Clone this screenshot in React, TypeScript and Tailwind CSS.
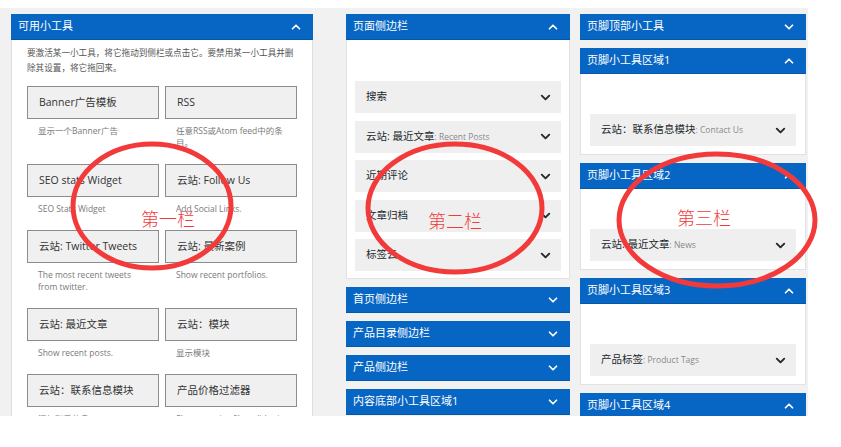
import { ChevronDown, ChevronUp } from "lucide-react";

const FONT = {
  fontFamily: '"Open Sans", "Noto Sans CJK SC", sans-serif',
};

const AVAILABLE_WIDGETS: { title: string; desc: string }[] = [
  { title: "Banner广告模板", desc: "显示一个Banner广告" },
  { title: "RSS", desc: "任意RSS或Atom feed中的条目。" },
  { title: "SEO stats Widget", desc: "SEO Stats Widget" },
  { title: "云站: Follow Us", desc: "Add Social Links." },
  { title: "云站: Twitter Tweets", desc: "The most recent tweets from twitter." },
  { title: "云站: 最新案例", desc: "Show recent portfolios." },
  { title: "云站: 最近文章", desc: "Show recent posts." },
  { title: "云站：模块", desc: "显示模块" },
  { title: "云站：联系信息模块", desc: "添加联系信息" },
  { title: "产品价格过滤器", desc: "Shows a price filter slider in a widget." },
];

const PAGE_SIDEBAR: { name: string; sub?: string }[] = [
  { name: "搜索" },
  { name: "云站: 最近文章", sub: "Recent Posts" },
  { name: "近期评论" },
  { name: "文章归档" },
  { name: "标签云" },
];

const COLLAPSED_SIDEBARS = ["首页侧边栏", "产品目录侧边栏", "产品侧边栏", "内容底部小工具区域1"];

const FOOTER_AREAS: { title: string; item: { name: string; sub: string } }[] = [
  { title: "页脚小工具区域1", item: { name: "云站：联系信息模块", sub: "Contact Us" } },
  { title: "页脚小工具区域2", item: { name: "云站: 最近文章", sub: "News" } },
  { title: "页脚小工具区域3", item: { name: "产品标签", sub: "Product Tags" } },
];

function Header({ title, open }: { title: string; open?: boolean }) {
  return (
    <div className="flex h-[26px] shrink-0 items-center justify-between border-b border-[#0557a8] bg-[#0766c4] pl-[7px] pr-[10px] text-[11px] text-white">
      <span>{title}</span>
      {open ? (
        <ChevronUp size={14} strokeWidth={3} />
      ) : (
        <ChevronDown size={14} strokeWidth={3} />
      )}
    </div>
  );
}

function SidebarItem({ name, sub }: { name: string; sub?: string }) {
  return (
    <div className="flex h-[32px] shrink-0 items-center justify-between bg-[#efefef] pl-[11px] pr-[8px]">
      <span className="text-[10.5px] text-[#23282d]">
        {name}
        {sub && <span className="text-[8.5px] text-[#8a8a8a]">: {sub}</span>}
      </span>
      <ChevronDown size={15} strokeWidth={3} className="text-[#23282d]" />
    </div>
  );
}

export default function App() {
  return (
    <div className="relative h-[447px] w-[841px] overflow-hidden bg-white" style={FONT}>
      <div className="mt-[8px] flex h-[408px] w-[808px] items-start overflow-hidden bg-[#f1f1f1] pl-[11px] pt-[6px]">
        {/* Available widgets */}
        <div className="w-[302px] shrink-0">
          <Header title="可用小工具" open />
          <div className="border-x border-[#dedede] bg-white px-[15px] pb-[20px] pt-[6px]">
            <p className="mb-[10px] text-[8.6px] leading-[15px] text-[#555]">
              要激活某一小工具，将它拖动到侧栏或点击它。要禁用某一小工具并删除其设置，将它拖回来。
            </p>
            <div className="grid grid-cols-2 gap-x-[6px] gap-y-[15px]">
              {AVAILABLE_WIDGETS.map((w) => (
                <div key={w.title}>
                  <div className="flex h-[33px] items-center border border-[#8c8c8c] bg-[#f0f0f0] pl-[11px] text-[10.5px] text-[#333]">
                    {w.title}
                  </div>
                  <p className="mt-[6px] px-[11px] text-[8.5px] leading-[12px] text-[#7a7a7a]">
                    {w.desc}
                  </p>
                </div>
              ))}
            </div>
          </div>
        </div>

        {/* Sidebars */}
        <div className="ml-[33px] flex w-[224px] shrink-0 flex-col">
          <Header title="页面侧边栏" open />
          <div className="flex flex-col gap-[7.5px] border-x border-b border-[#e2e2e2] bg-white px-[8px] pb-[7px] pt-[41px]">
            {PAGE_SIDEBAR.map((it) => (
              <SidebarItem key={it.name} name={it.name} sub={it.sub} />
            ))}
          </div>
          {COLLAPSED_SIDEBARS.map((t) => (
            <div key={t} className="mt-[8px]">
              <Header title={t} />
            </div>
          ))}
        </div>

        {/* Footer areas */}
        <div className="ml-[10px] flex w-[226px] shrink-0 flex-col gap-[8px]">
          <Header title="页脚顶部小工具" />
          {FOOTER_AREAS.map((a) => (
            <div key={a.title}>
              <Header title={a.title} open />
              <div className="border-x border-b border-[#e2e2e2] bg-white px-[9px] pb-[8px] pt-[40px]">
                <SidebarItem name={a.item.name} sub={a.item.sub} />
              </div>
            </div>
          ))}
          <Header title="页脚小工具区域4" open />
        </div>
      </div>

      {/* Red annotations drawn over the screenshot */}
      <svg className="pointer-events-none absolute left-0 top-0" width="841" height="447">
        <ellipse cx="152" cy="206" rx="79" ry="62" fill="none" stroke="#f23a3a" strokeWidth="5" />
        <ellipse cx="455" cy="208" rx="87" ry="64" fill="none" stroke="#f23a3a" strokeWidth="5" />
        <ellipse cx="717" cy="220" rx="98" ry="66" fill="none" stroke="#f23a3a" strokeWidth="5" />
      </svg>
      <span className="absolute left-[141px] top-[207px] text-[18px] font-light leading-[24px] text-[#f23a3a]">
        第一栏
      </span>
      <span className="absolute left-[428px] top-[209px] text-[18px] font-light leading-[24px] text-[#f23a3a]">
        第二栏
      </span>
      <span className="absolute left-[677px] top-[206px] text-[18px] font-light leading-[24px] text-[#f23a3a]">
        第三栏
      </span>
    </div>
  );
}
